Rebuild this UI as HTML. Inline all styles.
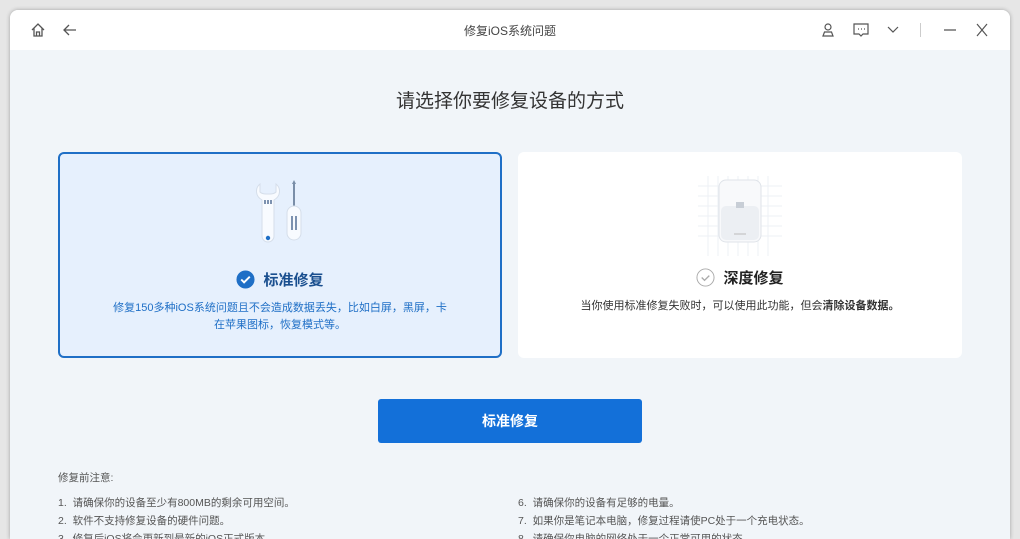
<!DOCTYPE html>
<html><head><meta charset="utf-8"><style>
*{margin:0;padding:0;box-sizing:border-box}
html,body{width:1020px;height:539px;overflow:hidden}
body{background:#e6e6e6;font-family:"Liberation Sans","Noto Sans CJK SC",sans-serif;position:relative}
.win{position:absolute;left:10px;top:10px;width:1000px;height:529px;background:#f1f5f9;border-radius:8px 8px 0 0;overflow:hidden;box-shadow:0 0 4px rgba(0,0,0,.3)}
.bar{height:40px;background:#fff;position:relative}
.title{position:absolute;left:0;right:0;top:12px;text-align:center;font-size:12px;color:#444}
.ic{position:absolute;top:12px}
h1{position:absolute;top:76px;left:0;right:0;text-align:center;font-size:19px;font-weight:400;color:#333}
.card{position:absolute;top:142px;height:206px;border-radius:6px;text-align:center}
.c1{left:48px;width:444px;background:#e6f0fd;border:2px solid #1f6fc6}
.c2{left:508px;width:444px;background:#fff}
.ct{position:absolute;top:115px;left:0;right:0;font-size:15px;font-weight:700;color:#222}
.cd{position:absolute;top:146px;left:52px;right:52px;font-size:11px;line-height:17px;color:#333}
.btn{position:absolute;left:368px;top:389px;width:264px;height:44px;background:#1370d9;border-radius:3px;color:#fff;font-size:14px;font-weight:700;text-align:center;line-height:44px}
.notes{position:absolute;top:460px;left:48px;font-size:10.5px;color:#555}
.li{position:absolute;font-size:10.5px;color:#555;white-space:nowrap}
</style></head><body>
<div class="win">
<div class="bar">
<svg class="ic" style="left:20px" width="16" height="16" viewBox="0 0 16 16" fill="none" stroke="#555" stroke-width="1.3"><path d="M2 8L8 2l6 6M4 6.5V14h8V6.5M6.5 14v-4h3v4"/></svg>
<svg class="ic" style="left:52px" width="16" height="16" viewBox="0 0 16 16" fill="none" stroke="#555" stroke-width="1.3"><path d="M14 8H2M7 3L2 8l5 5"/></svg>
<div class="title">修复iOS系统问题</div>
<svg class="ic" style="left:811px" width="14" height="16" viewBox="0 0 14 16" fill="none" stroke="#555" stroke-width="1.2"><circle cx="7" cy="5" r="3"/><path d="M2 14l1.5-4h7L12 14z"/></svg>
<svg class="ic" style="left:842px" width="18" height="16" viewBox="0 0 18 16" fill="none" stroke="#555" stroke-width="1.2"><path d="M2 2h14v10H11l-2 2-2-2H2z"/><path d="M6 7h1M9 7h1M12 7h1"/></svg>
<svg class="ic" style="left:876px" width="14" height="16" viewBox="0 0 14 16" fill="none" stroke="#555" stroke-width="1.2"><path d="M2 5l5 5 5-5"/></svg>
<div style="position:absolute;left:910px;top:13px;width:1px;height:14px;background:#ccc"></div>
<svg class="ic" style="left:933px" width="14" height="16" viewBox="0 0 14 16" stroke="#555" stroke-width="1.2"><path d="M1 8h12"/></svg>
<svg class="ic" style="left:965px" width="14" height="16" viewBox="0 0 14 16" stroke="#555" stroke-width="1.2"><path d="M2 2l10 12M12 2L2 14"/></svg>
</div>
<h1>请选择你要修复设备的方式</h1>
<div class="card c1">
<svg style="position:absolute;left:196px;top:26px" width="52" height="64" viewBox="0 0 52 64"><path d="M4 4c-5 4-5 12 2 16v36a6 6 0 0 0 12 0V20c7-4 7-12 2-16v8c-2 2-4 2-6 2h-4c-2 0-4 0-6-2z" fill="#f8fbff" stroke="#d5deea"/><path d="M9 20v4M12 20v4M15 20v4" stroke="#3b5a85" stroke-width="1.3"/><circle cx="12" cy="58" r="2.2" fill="#1f6fc6"/><path d="M38 2v24" stroke="#7a8ea8" stroke-width="2"/><path d="M38 0l-2 4h4z" fill="#7a8ea8"/><rect x="31" y="26" width="14" height="34" rx="7" fill="#f8fbff" stroke="#d5deea"/><path d="M36 36v14M40 36v14" stroke="#3b5a85" stroke-width="1.3"/></svg>
<div class="ct"><svg width="19" height="19" viewBox="0 0 20 20" style="vertical-align:-4px;margin-right:8px"><circle cx="10" cy="10" r="9.5" fill="#1f6fc6"/><path d="M5.5 10l3 3 6-6" stroke="#fff" stroke-width="2" fill="none"/></svg><span style="color:#1a4f8f">标准修复</span></div>
<div class="cd" style="color:#1f6fc6">修复150多种iOS系统问题且不会造成数据丢失，比如白屏，黑屏，卡在苹果图标，恢复模式等。</div>
</div>
<div class="card c2">
<svg style="position:absolute;left:180px;top:24px" width="84" height="80" viewBox="0 0 84 80"><g stroke="#eef1f5"><path d="M0 10h84M0 20h84M0 30h84M0 40h84M0 50h84M0 60h84M10 0v80M20 0v80M30 0v80M40 0v80M50 0v80M60 0v80M70 0v80"/></g><rect x="21" y="4" width="42" height="62" rx="7" fill="#f8f9fb" stroke="#dfe3e9"/><rect x="23" y="30" width="38" height="34" rx="5" fill="#eceff3"/><rect x="38" y="26" width="8" height="6" fill="#c8ced6"/><path d="M36 58h12" stroke="#bbb"/></svg>
<div class="ct"><svg width="19" height="19" viewBox="0 0 20 20" style="vertical-align:-4px;margin-right:8px"><circle cx="10" cy="10" r="9" fill="none" stroke="#aaa"/><path d="M6 10l3 3 5-5" stroke="#aaa" stroke-width="1.4" fill="none"/></svg>深度修复</div>
<div class="cd" style="left:20px;right:20px">当你使用标准修复失败时，可以使用此功能，但会<b>清除设备数据。</b></div>
</div>
<div class="btn">标准修复</div>
<div class="notes">修复前注意:</div>
<div class="li" style="left:48px;top:485px">1.&nbsp; 请确保你的设备至少有800MB的剩余可用空间。</div>
<div class="li" style="left:48px;top:503px">2.&nbsp; 软件不支持修复设备的硬件问题。</div>
<div class="li" style="left:48px;top:521px">3.&nbsp; 修复后iOS将会更新到最新的iOS正式版本。</div>
<div class="li" style="left:508px;top:485px">6.&nbsp; 请确保你的设备有足够的电量。</div>
<div class="li" style="left:508px;top:503px">7.&nbsp; 如果你是笔记本电脑，修复过程请使PC处于一个充电状态。</div>
<div class="li" style="left:508px;top:521px">8.&nbsp; 请确保你电脑的网络处于一个正常可用的状态。</div>
</div>
</body></html>
